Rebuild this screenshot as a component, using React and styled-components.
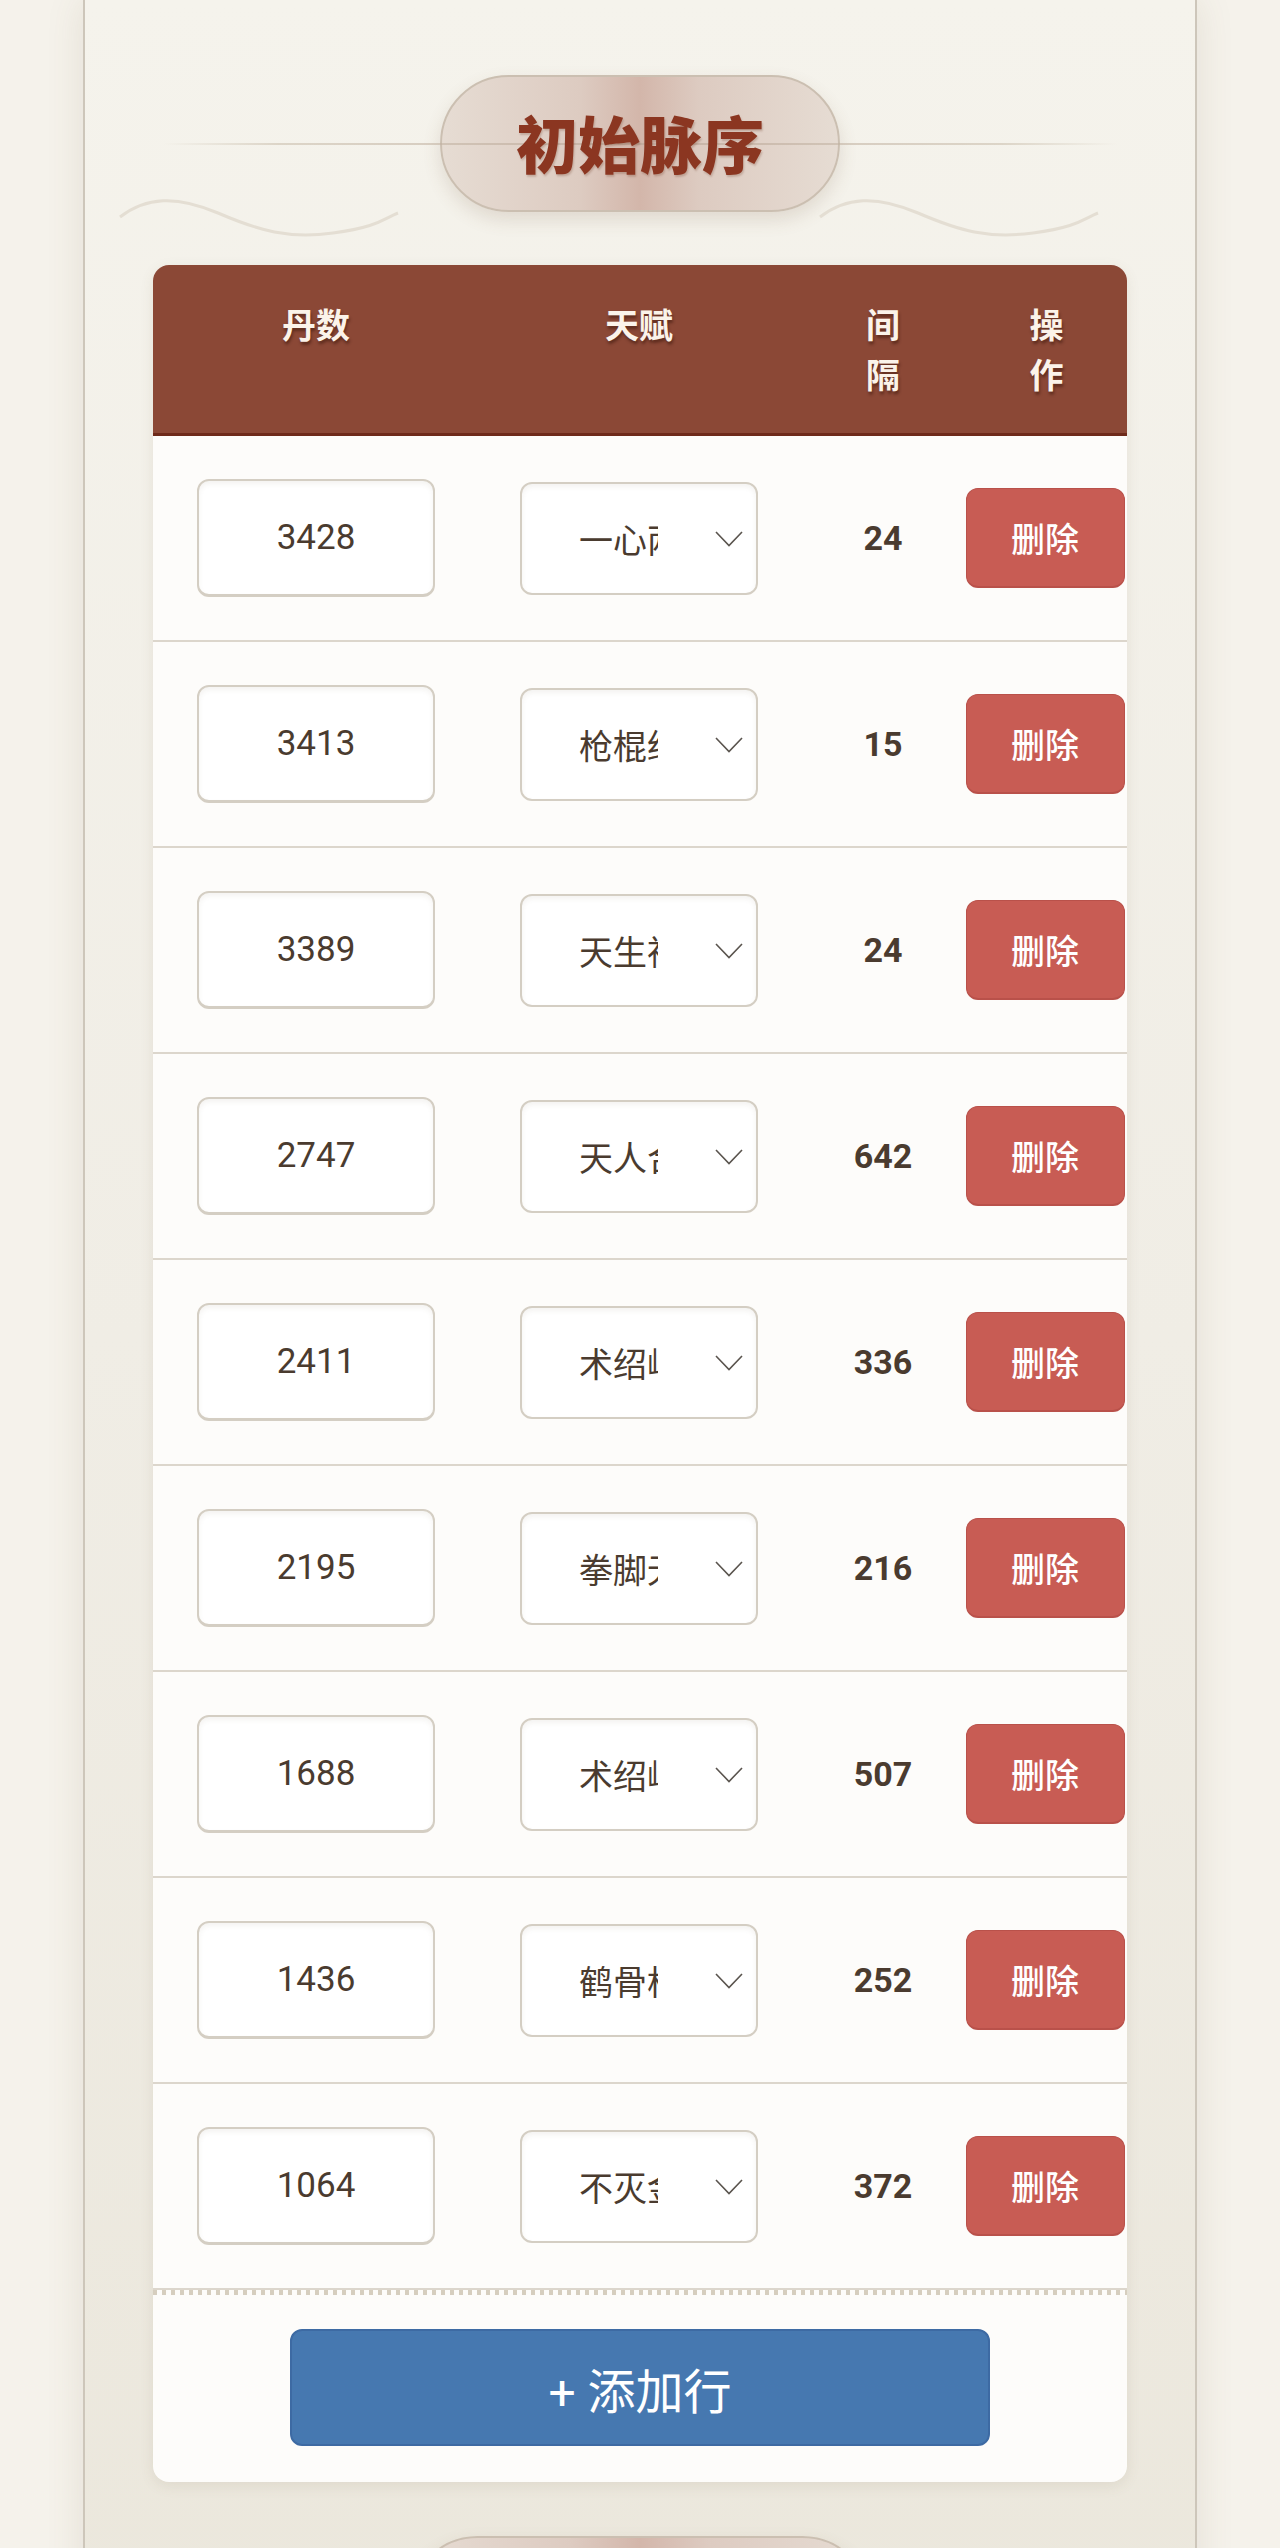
import React from "react";
import styled, { createGlobalStyle } from "styled-components";

const GlobalStyle = createGlobalStyle`
  html, body {
    margin: 0;
    padding: 0;
    background: #f5f2eb;
  }
  body {
    font-family: Roboto, "Noto Sans CJK SC", "Noto Sans", sans-serif;
    color: #4a3b2f;
  }
  * {
    box-sizing: border-box;
  }
`;

const COLUMNS = "326px 320px 168px 159px";

const Page = styled.div`
  width: 1114px;
  min-height: 2548px;
  margin: 0 auto;
  padding: 75px 68px 0;
  border-left: 2px solid #cdc6ba;
  border-right: 2px solid #cdc6ba;
  background: linear-gradient(180deg, #f5f3ec 0%, #f0ede5 50%, #ebe7dc 100%);
  box-shadow: 0 0 36px rgba(110, 90, 60, 0.12);
`;

const Section = styled.section`
  & + & {
    margin-top: 54px;
  }
`;

const TitleBar = styled.div`
  position: relative;
  display: flex;
  justify-content: center;
  margin-bottom: 53px;

  &::before {
    content: "";
    position: absolute;
    left: 10px;
    right: 10px;
    top: 68px;
    height: 2px;
    z-index: 1;
    background: linear-gradient(
      90deg,
      rgba(200, 188, 170, 0) 0%,
      rgba(200, 188, 170, 0.55) 12%,
      rgba(185, 165, 150, 0.6) 50%,
      rgba(200, 188, 170, 0.55) 88%,
      rgba(200, 188, 170, 0) 100%
    );
  }
`;

const TitlePill = styled.h2`
  margin: 0;
  height: 137px;
  padding: 0 74px;
  border: 2px solid #cbbfb1;
  border-radius: 999px;
  background: linear-gradient(
    90deg,
    #e6dcd3 0%,
    #ddcbc1 35%,
    #d3b6aa 50%,
    #ddcbc1 65%,
    #e6dcd3 100%
  );
  box-shadow: 0 8px 18px rgba(120, 90, 60, 0.16);
  font-family: "Noto Sans CJK SC", sans-serif;
  font-size: 62px;
  font-weight: 900;
  line-height: 131px;
  color: #8b3621;
`;

const TitleText = styled.span`
  position: relative;
  z-index: 2;
  text-shadow: 1px 2px 2px rgba(90, 30, 10, 0.22);
`;

const Wave = styled.svg`
  position: absolute;
  top: 122px;
  ${(p) => (p.$side === "left" ? "left: -35px;" : "right: 27px;")}
  width: 282px;
  height: 42px;
  fill: none;
  stroke: #e4ded3;
  stroke-width: 3;
`;

const Card = styled.div`
  background: #fdfcfa;
  border-radius: 16px;
  overflow: hidden;
  box-shadow: 0 4px 14px rgba(110, 90, 60, 0.1);
`;

const HeadRow = styled.div`
  display: grid;
  grid-template-columns: ${COLUMNS};
  background: #8b4836;
  border-bottom: 3px solid #6e2a1a;
  padding: 34px 0 34px;
  min-height: 171px;
`;

const HeadCell = styled.div`
  font-family: "Noto Sans CJK SC", sans-serif;
  font-size: 34px;
  font-weight: 700;
  line-height: 50px;
  text-align: center;
  color: #fbf3ea;
  text-shadow: 1px 3px 3px rgba(40, 10, 0, 0.45);
  ${(p) => p.$stack && "width: min-content; margin: 0 auto;"}
`;

const Row = styled.div`
  display: grid;
  grid-template-columns: ${COLUMNS};
  align-items: center;
  justify-items: center;
  height: 206px;
  border-bottom: 2px solid #dcd6cc;
`;

const NumberInput = styled.input`
  width: 238px;
  height: 118px;
  border: 2px solid #d4cec3;
  border-bottom-width: 3px;
  border-radius: 12px;
  background: #fff;
  box-shadow: inset 0 3px 5px rgba(120, 100, 80, 0.08);
  font-family: Roboto, sans-serif;
  font-size: 35px;
  color: #4a3b2f;
  text-align: center;
  outline: none;
`;

const SelectWrap = styled.div`
  position: relative;
  width: 238px;
  height: 113px;
`;

const TalentSelect = styled.select`
  appearance: none;
  width: 100%;
  height: 100%;
  padding: 0 98px 0 57px;
  border: 2px solid #d4cec3;
  border-radius: 12px;
  background: #fff;
  box-shadow: inset 0 3px 5px rgba(120, 100, 80, 0.08);
  font-family: "Noto Sans CJK SC", sans-serif;
  font-size: 34px;
  color: #4a3b2f;
  outline: none;
  overflow: hidden;
`;

const Chevron = styled.svg`
  position: absolute;
  right: 15px;
  top: 49px;
  width: 28px;
  height: 16px;
  fill: none;
  stroke: #5a544e;
  stroke-width: 1.6;
  pointer-events: none;
`;

const Gap = styled.span`
  font-family: Roboto, sans-serif;
  font-size: 34px;
  font-weight: 700;
  color: #4a3b2f;
`;

const DeleteButton = styled.button`
  width: 159px;
  height: 100px;
  margin-left: -3px;
  border: 1px solid #b9514a;
  border-bottom-width: 2px;
  border-radius: 12px;
  background: #c85c54;
  font-family: "Noto Sans CJK SC", sans-serif;
  font-size: 34px;
  font-weight: 500;
  color: #fff;
  cursor: pointer;
`;

const Divider = styled.div`
  height: 5px;
  background: repeating-linear-gradient(
    90deg,
    #d6cebf 0 4px,
    transparent 4px 9px
  );
`;

const Footer = styled.div`
  display: flex;
  justify-content: center;
  padding: 34px 0 36px;
`;

const AddButton = styled.button`
  width: 700px;
  height: 117px;
  border: 2px solid #3d6aa3;
  border-radius: 12px;
  background: #4678b0;
  font-family: Roboto, "Noto Sans CJK SC", sans-serif;
  font-size: 48px;
  color: #fff;
  cursor: pointer;
`;

const rows = [
  { dan: 3428, talent: "一心两用", gap: 24 },
  { dan: 3413, talent: "枪棍绝艺", gap: 15 },
  { dan: 3389, talent: "天生神力", gap: 24 },
  { dan: 2747, talent: "天人合一", gap: 642 },
  { dan: 2411, talent: "术绍岐黄", gap: 336 },
  { dan: 2195, talent: "拳脚无双", gap: 216 },
  { dan: 1688, talent: "术绍岐黄", gap: 507 },
  { dan: 1436, talent: "鹤骨松姿", gap: 252 },
  { dan: 1064, talent: "不灭金身", gap: 372 },
];

const wavePath = "M2 20 C 28 0, 58 -2, 100 16 S 170 42, 215 36 S 265 22, 280 16";

const SectionTitle = ({ children }) => (
  <TitleBar>
    <TitlePill>
      <TitleText>{children}</TitleText>
    </TitlePill>
    <Wave $side="left" viewBox="0 0 282 42">
      <path d={wavePath} />
    </Wave>
    <Wave $side="right" viewBox="0 0 282 42">
      <path d={wavePath} />
    </Wave>
  </TitleBar>
);

export default function App() {
  return (
    <>
      <GlobalStyle />
      <Page>
        <Section>
          <SectionTitle>初始脉序</SectionTitle>
          <Card>
            <HeadRow>
              <HeadCell>丹数</HeadCell>
              <HeadCell>天赋</HeadCell>
              <HeadCell $stack>间隔</HeadCell>
              <HeadCell $stack>操作</HeadCell>
            </HeadRow>
            {rows.map((r, i) => (
              <Row key={i}>
                <NumberInput type="text" defaultValue={r.dan} />
                <SelectWrap>
                  <TalentSelect defaultValue={r.talent}>
                    <option>{r.talent}</option>
                  </TalentSelect>
                  <Chevron viewBox="0 0 28 16">
                    <path d="M1 1 L14 14.5 L27 1" />
                  </Chevron>
                </SelectWrap>
                <Gap>{r.gap}</Gap>
                <DeleteButton>删除</DeleteButton>
              </Row>
            ))}
            <Divider />
            <Footer>
              <AddButton>+ 添加行</AddButton>
            </Footer>
          </Card>
        </Section>
        <Section>
          <SectionTitle>最优脉序表</SectionTitle>
        </Section>
      </Page>
    </>
  );
}
